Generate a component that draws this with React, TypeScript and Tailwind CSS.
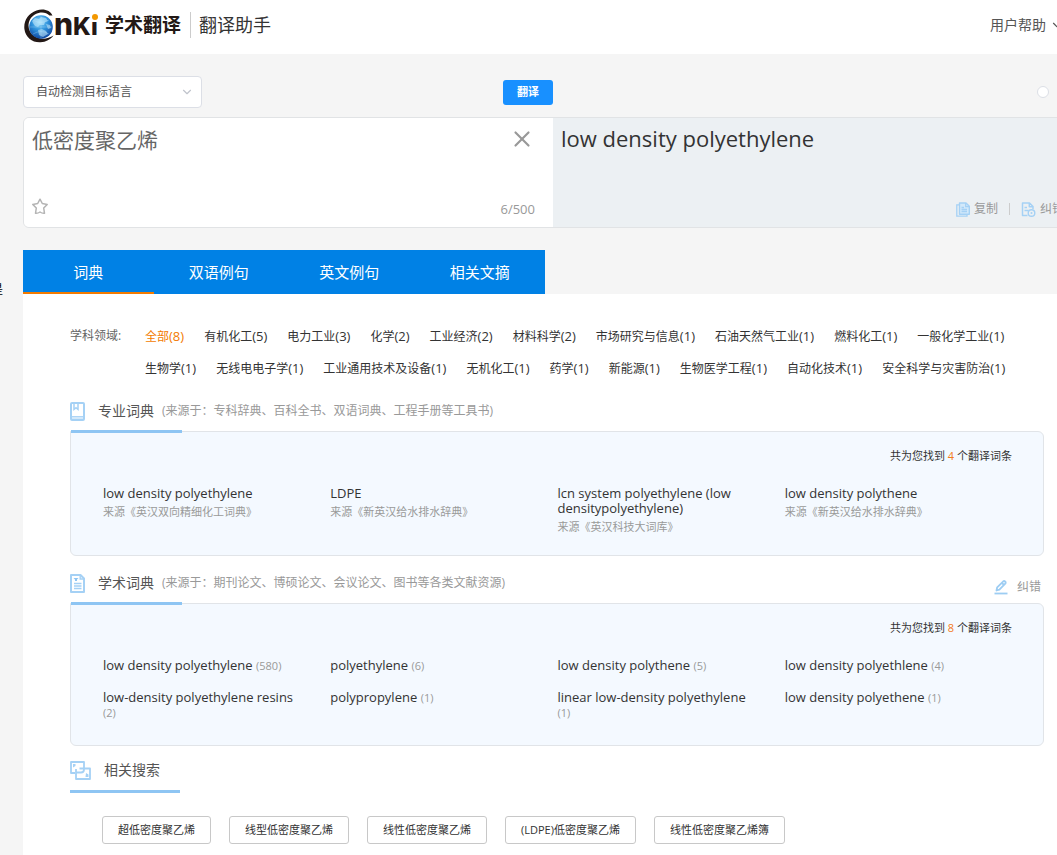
import clsx from "clsx";
import { ChevronDown, X } from "lucide-react";
import { ReactNode, useState } from "react";

const tabs = ["词典", "双语例句", "英文例句", "相关文摘"];

const fields = [
  { name: "全部", count: 8 },
  { name: "有机化工", count: 5 },
  { name: "电力工业", count: 3 },
  { name: "化学", count: 2 },
  { name: "工业经济", count: 2 },
  { name: "材料科学", count: 2 },
  { name: "市场研究与信息", count: 1 },
  { name: "石油天然气工业", count: 1 },
  { name: "燃料化工", count: 1 },
  { name: "一般化学工业", count: 1 },
  { name: "生物学", count: 1 },
  { name: "无线电电子学", count: 1 },
  { name: "工业通用技术及设备", count: 1 },
  { name: "无机化工", count: 1 },
  { name: "药学", count: 1 },
  { name: "新能源", count: 1 },
  { name: "生物医学工程", count: 1 },
  { name: "自动化技术", count: 1 },
  { name: "安全科学与灾害防治", count: 1 },
];

const professional = [
  { term: "low density polyethylene", source: "来源《英汉双向精细化工词典》" },
  { term: "LDPE", source: "来源《新英汉给水排水辞典》" },
  {
    term: "lcn system polyethylene (low densitypolyethylene)",
    source: "来源《英汉科技大词库》",
  },
  { term: "low density polythene", source: "来源《新英汉给水排水辞典》" },
];

const academic = [
  { term: "low density polyethylene", count: 580 },
  { term: "polyethylene", count: 6 },
  { term: "low density polythene", count: 5 },
  { term: "low density polyethlene", count: 4 },
  { term: "low-density polyethylene resins", count: 2 },
  { term: "polypropylene", count: 1 },
  { term: "linear low-density polyethylene", count: 1 },
  { term: "low density polyethene", count: 1 },
];

const related = [
  "超低密度聚乙烯",
  "线型低密度聚乙烯",
  "线性低密度聚乙烯",
  "(LDPE)低密度聚乙烯",
  "线性低密度聚乙烯簿",
];

function Logo() {
  return (
    <svg width="78" height="36" viewBox="0 0 78 36" aria-label="CNKI">
      <defs>
        <radialGradient id="globe" cx="0.45" cy="0.3" r="0.75">
          <stop offset="0" stopColor="#8fd8fa" />
          <stop offset="0.45" stopColor="#2f93dc" />
          <stop offset="1" stopColor="#0b3f9a" />
        </radialGradient>
      </defs>
      <path
        d="M28.500 8.500C26.500 3.500 19.500 1 12.500 3.500 4 6.500-.5 14 .4 22 1.500 30.500 8.500 35.800 16.500 35.300 22 35 26.500 32.500 29.500 28.500 24 32.300 16 32.800 10.500 29.300 4.500 25.500 3 18 6 12.500 10.500 5 20.500 3.500 25.500 8.500z"
        fill="#231815"
      />
      <circle cx="17" cy="20" r="11.800" fill="url(#globe)" />
      <path
        d="M8 14l3-3 4 1 2-2 5 1 2 3-3 1-1 3-4 0-2 2-3-1-2-3zM14 23l4-1 4 2 2 3-5 3-4-2zM22 17l4 1 1 3-3 1z"
        fill="#cdeefd"
        opacity="0.55"
      />
      <path
        d="M6 20h22M17 9v22M9 13q8 5 16 0M9 27q8-5 16 0"
        fill="none"
        stroke="#bfe6fb"
        strokeWidth="0.5"
        opacity="0.6"
      />
      <g
        fill="#231815"
        fontFamily="Inter, 'Noto Sans', sans-serif"
        fontWeight="800">
        <text x="30" y="28" fontSize="30">
          n
        </text>
        <text x="49" y="28" fontSize="24">
          K
        </text>
        <text x="67" y="28" fontSize="24">
          ı
        </text>
      </g>
      <circle cx="71" cy="10" r="3" fill="#f39800" />
    </svg>
  );
}

function StarIcon() {
  return (
    <svg width="16" height="17" viewBox="0 0 16 17" fill="none">
      <path
        d="M8 1.200l2.300 4.300 4.900.9-3.500 3.600.8 5.300q-2.500.2-4.500-1.300-2 1.500-4.500 1.300l.8-5.300L.8 6.400l4.900-.9z"
        stroke="#b4b4b4"
        strokeWidth="1.500"
        strokeLinejoin="round"
      />
    </svg>
  );
}

function CopyIcon() {
  return (
    <svg width="14" height="15" viewBox="0 0 14 15" fill="none">
      <path
        d="M3.500 1h6.500L13.300 4.300V12.300H3.500z"
        fill="#d3e9fa"
        stroke="#a5d1f5"
        strokeWidth="1.400"
        strokeLinejoin="round"
      />
      <path
        d="M3.500 2.800H.8v11.400H11v-1.900M9.700 1v3.600h3.600M5.500 5.500h2.500M5.500 7.500h5.500M5.500 9.500h5.500"
        stroke="#a5d1f5"
        strokeWidth="1.300"
      />
    </svg>
  );
}

function ReportIcon() {
  return (
    <svg width="15" height="15" viewBox="0 0 15 15" fill="none">
      <path
        d="M6.500 13.500H1.500V1H8.500L12 4.500V7M8.300 1v3.700H12M3.500 5.500H6M3.500 8.500h4"
        stroke="#a5d1f5"
        strokeWidth="1.500"
        strokeLinejoin="round"
      />
      <circle cx="10.500" cy="11" r="3.300" stroke="#a5d1f5" strokeWidth="1.400" />
      <circle cx="10.500" cy="11" r="1" fill="#a5d1f5" />
    </svg>
  );
}

function BookIcon() {
  return (
    <svg width="15" height="19" viewBox="0 0 15 19" fill="none">
      <rect
        x="1"
        y="1"
        width="13"
        height="17"
        rx="1"
        stroke="#a5d1f5"
        strokeWidth="2"
      />
      <path d="M1 14.800h13" stroke="#a5d1f5" strokeWidth="1.400" />
      <path d="M2 16.300h11" stroke="#d3e9fa" strokeWidth="1.400" />
      <path d="M4 1v6.500l2-1.700 2 1.700V1" stroke="#a5d1f5" strokeWidth="1.500" />
    </svg>
  );
}

function DocIcon() {
  return (
    <svg width="15" height="19" viewBox="0 0 15 19" fill="none">
      <path
        d="M1 1H10.500L14 4.500V18H1z"
        stroke="#a5d1f5"
        strokeWidth="2"
        strokeLinejoin="round"
      />
      <path
        d="M10.200 1v4h4M4 9.500h7.500M4 12h7.500M4 14.500h7.500"
        stroke="#a5d1f5"
        strokeWidth="1.400"
      />
      <path d="M3.500 4h5L7 5.500V7H5V5.500z" fill="#8ec5f3" />
    </svg>
  );
}

function RelatedIcon() {
  return (
    <svg width="21" height="19" viewBox="0 0 21 19" fill="none">
      <path
        d="M5 12H1V1h13v6M9.500 7.500H20V18H6V8M6 11.500h5q3 0 3-3V7"
        stroke="#a5d1f5"
        strokeWidth="1.800"
        strokeLinejoin="round"
      />
      <path d="M3 3h2.500v2L3 6.500zM16 12l2.500 1.500V16H15.500z" fill="#a5d1f5" />
    </svg>
  );
}

function PencilIcon() {
  return (
    <svg width="14" height="15" viewBox="0 0 14 15" fill="none">
      <path
        d="M2.500 10.500l.7-3.200L9.300 1.300q.9-.6 1.800.2t.4 1.900L5.400 9.700zM8 3l2.200 2.200"
        stroke="#9dcdf3"
        strokeWidth="1.800"
        strokeLinejoin="round"
      />
      <path d="M.5 13.500h13" stroke="#9dcdf3" strokeWidth="1.800" />
    </svg>
  );
}

function SectionTitle({
  icon,
  title,
  note,
  className,
  children,
}: {
  icon: ReactNode;
  title: string;
  note?: string;
  className?: string;
  children?: ReactNode;
}) {
  return (
    <div className={clsx("flex h-10 items-center", className)}>
      {icon}
      <h2 className="ml-[13px] text-sm text-[#555]">{title}</h2>
      {note && <span className="ml-2 text-[12px] text-[#999]">{note}</span>}
      {children}
    </div>
  );
}

function ResultCard({
  total,
  className,
  children,
}: {
  total: number;
  className?: string;
  children: ReactNode;
}) {
  return (
    <div
      className={clsx(
        "relative rounded-md rounded-tl-none border border-[#e1e4e8] bg-[#f4f9ff] pt-[15px] pr-[31px] pl-8",
        className,
      )}>
      {/* Accent bar over the top border */}
      <div className="absolute -top-0.5 left-0 h-[3px] w-[111px] bg-[#8ec5f3]" />
      <p className="mb-[21px] text-right leading-[18px] text-[#333]">
        共为您找到 <span className="text-[#f37b1d]">{total}</span> 个翻译词条
      </p>
      <ul className="grid grid-cols-4 gap-y-[17px] text-[13px] leading-[15px] text-[#333]">
        {children}
      </ul>
    </div>
  );
}

export default function App() {
  const [text, setText] = useState("低密度聚乙烯");
  const [tab, setTab] = useState(0);
  const [field, setField] = useState(0);

  return (
    <div className="relative min-h-screen overflow-hidden bg-[#f5f5f5] font-['Open_Sans','Noto_Sans_CJK_SC',sans-serif] text-[11px]">
      <header className="flex h-[54px] min-w-[1083px] items-center bg-white pr-[19px] pb-1 pl-6">
        <a href="#" className="flex items-center gap-[3px]">
          <Logo />
          <span className="text-[19px] leading-6 font-bold text-[#231815]">
            学术翻译
          </span>
        </a>
        <h1 className="ml-[9px] border-l border-[#ccc] pl-2 text-lg leading-[26px] text-[#333]">
          翻译助手
        </h1>
        <button className="ml-auto flex items-center gap-1 text-sm text-[#555]">
          用户帮助
          <ChevronDown size={14} strokeWidth={2} />
        </button>
      </header>

      {/* Side menu, tucked behind the left edge */}
      <span className="absolute top-[282px] -left-[9px] text-[12px] leading-4 text-black">
        是
      </span>

      <main className="ml-[23px] min-w-[1060px]">
        <div className="grid grid-cols-2 pt-[22px] pb-[9px]">
          <div className="flex items-center justify-between">
            <div className="relative">
              <select
                aria-label="目标语言"
                className="h-8 w-[179px] appearance-none rounded border border-[#dcdfe6] bg-white pl-3 text-[12px] text-[#555]">
                <option>自动检测目标语言</option>
              </select>
              <ChevronDown
                size={14}
                strokeWidth={2}
                className="pointer-events-none absolute top-[9px] right-2 text-[#c0c4cc]"
              />
            </div>
            <button className="h-[25px] w-[50px] rounded-[3px] bg-[#1890ff] font-bold text-white">
              翻译
            </button>
          </div>
          <div className="flex items-center justify-end pr-[34px]">
            <input
              type="radio"
              name="mode"
              aria-label="专业模式"
              className="size-3 appearance-none rounded-full border border-[#dcdfe6] bg-white"
            />
          </div>
        </div>

        <div className="grid grid-cols-2 overflow-hidden rounded-md border border-[#e1e3e5]">
          <div className="flex h-[109px] flex-col justify-between bg-white pr-[18px] pb-2 pl-2">
            <div className="flex items-start pt-2">
              <textarea
                aria-label="原文"
                value={text}
                onChange={(e) => setText(e.target.value)}
                className="h-[60px] flex-1 resize-none text-[21px] leading-[28px] text-[#666] outline-none"
              />
              <button aria-label="清空" onClick={() => setText("")}>
                <X size={26} strokeWidth={2} className="text-[#999]" />
              </button>
            </div>
            <div className="flex items-end justify-between">
              <button aria-label="收藏" className="pb-1">
                <StarIcon />
              </button>
              <span className="text-[13px] leading-5 text-[#999]">
                {text.length}/500
              </span>
            </div>
          </div>
          <div className="flex flex-col justify-between bg-[#ecf0f3] pr-[18px] pb-2 pl-2">
            <p className="pt-1.5 text-[22px] leading-7 text-[#333]">
              low density polyethylene
            </p>
            <div className="flex items-center justify-end text-[12px] leading-5 text-[#999]">
              <button className="flex items-center gap-1">
                <CopyIcon />
                复制
              </button>
              <span className="mx-[11px] h-3 w-px bg-[#ccc]" />
              <button className="flex items-center gap-1">
                <ReportIcon />
                纠错
              </button>
            </div>
          </div>
        </div>

        <nav className="mt-[22px] grid w-[522px] grid-cols-4 bg-[#0081e5] text-[15px] text-white">
          {tabs.map((name, index) => (
            <button
              key={name}
              onClick={() => setTab(index)}
              className={clsx(
                "h-11 border-y-2",
                index === tab
                  ? "border-t-transparent border-b-[#f37b00]"
                  : "border-transparent",
              )}>
              {name}
            </button>
          ))}
        </nav>

        <div className="bg-white pt-[26px] pr-[39px] pb-10 pl-[47px]">
          <div className="flex text-[12px] leading-8">
            <span className="w-[75px] shrink-0 text-[#666]">学科领域:</span>
            <div className="flex flex-wrap gap-x-5">
              {fields.map(({ name, count }, index) => (
                <button
                  key={name}
                  onClick={() => setField(index)}
                  className={clsx(
                    "h-8",
                    index === field ? "text-[#f37b00]" : "text-[#333]",
                  )}>
                  {name}
                  <span className="text-[13px]">({count})</span>
                </button>
              ))}
            </div>
          </div>

          <SectionTitle
            icon={<BookIcon />}
            title="专业词典"
            note="(来源于：专科辞典、百科全书、双语词典、工程手册等工具书)"
            className="mt-[7px]"
          />
          <ResultCard total={4} className="pb-[18px]">
            {professional.map(({ term, source }, index) => (
              <li key={index} className="pr-7">
                <a href="#">{term}</a>
                <p className="text-[11px] leading-[21px] text-[#999]">
                  {source}
                </p>
              </li>
            ))}
          </ResultCard>

          <SectionTitle
            icon={<DocIcon />}
            title="学术词典"
            note="(来源于：期刊论文、博硕论文、会议论文、图书等各类文献资源)"
            className="mt-[7px]">
            <button className="mt-2 mr-[3px] ml-auto flex items-center gap-[9px] text-[12px] text-[#999]">
              <PencilIcon />
              纠错
            </button>
          </SectionTitle>
          <ResultCard total={8} className="pb-[25px]">
            {academic.map(({ term, count }) => (
              <li key={term} className="pr-7">
                <a href="#">{term}</a>{" "}
                <span className="text-[11px] text-[#999]">({count})</span>
              </li>
            ))}
          </ResultCard>

          <SectionTitle
            icon={<RelatedIcon />}
            title="相关搜索"
            className="mt-1"
          />
          <div className="h-[3px] w-[110px] bg-[#8ec5f3]" />
          <div className="mt-[23px] flex gap-[18px] pl-8">
            {related.map((word) => (
              <button
                key={word}
                className="h-7 rounded-[3px] border border-[#c8c8c8] bg-white px-[15px] text-[#333]">
                {word}
              </button>
            ))}
          </div>
        </div>
      </main>
    </div>
  );
}
